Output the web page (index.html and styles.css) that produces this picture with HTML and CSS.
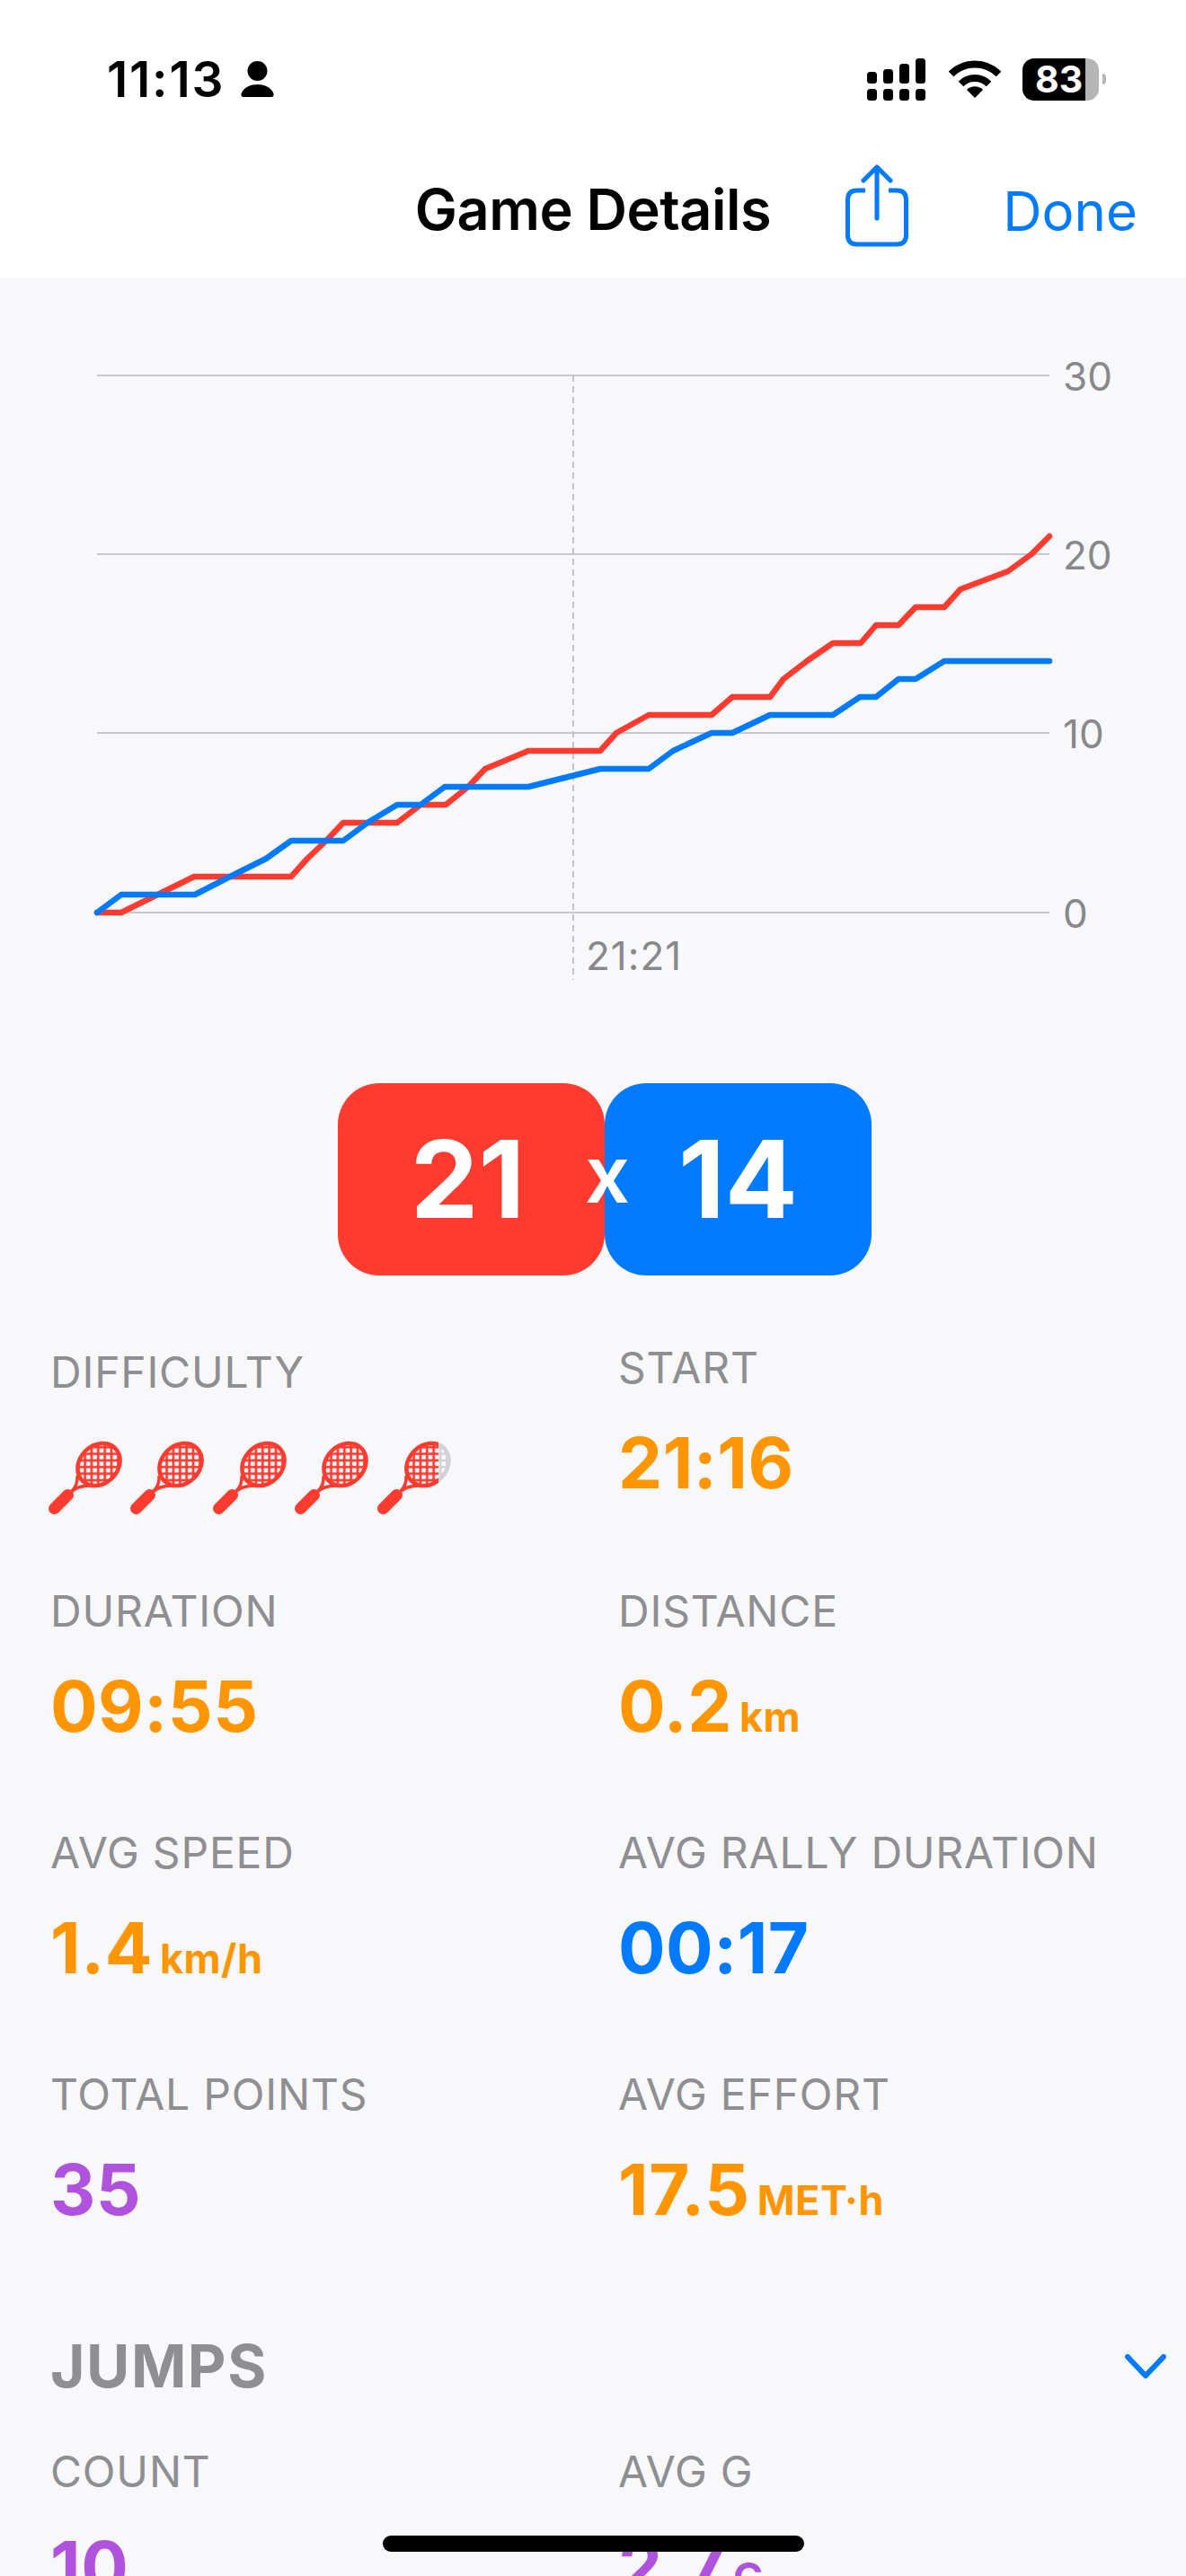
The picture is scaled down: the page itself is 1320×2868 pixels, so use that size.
FILE: index.html
```html
<!DOCTYPE html>
<html lang="en">
<head>
    <meta charset="UTF-8">
    <meta name="viewport" content="width=device-width, initial-scale=1.0">
    <title>Game Details</title>
    <link rel="stylesheet" href="styles.css">
</head>
<body>
    <svg class="defs" width="0" height="0">
        <defs>
            <pattern id="mesh" patternUnits="userSpaceOnUse" width="10.4" height="10.4" patternTransform="translate(1.5 2)">
                <path d="M5.2 1.9 8.5 5.2 5.2 8.5 1.9 5.2Z" fill="#fcfcfd"/>
                <path d="M0 -3.3 3.3 0 0 3.3 -3.3 0Z" fill="#fcfcfd"/>
                <path d="M10.4 -3.3 13.7 0 10.4 3.3 7.1 0Z" fill="#fcfcfd"/>
                <path d="M0 7.1 3.3 10.4 0 13.7 -3.3 10.4Z" fill="#fcfcfd"/>
                <path d="M10.4 7.1 13.7 10.4 10.4 13.7 7.1 10.4Z" fill="#fcfcfd"/>
            </pattern>
            <symbol id="racket" viewBox="0 0 82 82">
                <ellipse cx="56" cy="26.5" rx="28" ry="23.5" transform="rotate(-45 56 26.5)" fill="currentColor"/>
                <ellipse cx="56" cy="26.5" rx="23.5" ry="19" transform="rotate(-45 56 26.5)" fill="url(#mesh)"/>
                <path d="M25 57Q33 50 32 39M25 57Q33 50 46 50" fill="none" stroke="currentColor" stroke-width="3.5"/>
                <path d="M6.5 75.500 21.500 60.500" stroke="currentColor" stroke-width="13" stroke-linecap="round"/>
            </symbol>
            <clipPath id="racketCut">
                <rect x="0" y="0" width="68" height="82"/>
            </clipPath>
        </defs>
    </svg>

    <header class="header">
        <div class="status-bar">
            <div class="status-left">
                <span class="time">11:13</span>
                <svg class="person" width="37" height="40" viewBox="0 0 37 40">
                    <circle cx="18.500" cy="11" r="11"/>
                    <path d="M3 40C0 40 0 37 1 35 4 29 11 26 18.500 26 26 26 33 29 36 35 37 37 37 40 34 40Z"/>
                </svg>
            </div>
            <div class="status-right">
                <svg width="65" height="47" viewBox="0 0 65 47">
                    <rect x="0" y="15" width="11" height="13" rx="3.500"/>
                    <rect x="18" y="12" width="11" height="16" rx="3.500"/>
                    <rect x="36" y="6" width="11" height="22" rx="3.500"/>
                    <rect x="54" y="0" width="11" height="28" rx="3.500"/>
                    <rect x="0" y="34" width="11" height="13" rx="3.500"/>
                    <rect x="18" y="34" width="11" height="13" rx="3.500"/>
                    <rect x="36" y="34" width="11" height="13" rx="3.500"/>
                    <rect x="54" y="34" width="11" height="13" rx="3.500"/>
                </svg>
                <svg width="58" height="42" viewBox="0 0 58 42">
                    <path d="M2.500 15.500A37.500 37.500 0 0 1 55.500 15.500" fill="none" stroke="#000" stroke-width="8"/>
                    <path d="M13.500 26.500A22 22 0 0 1 44.500 26.500" fill="none" stroke="#000" stroke-width="8"/>
                    <path d="M29 42 20 33A12.700 12.700 0 0 1 38 33Z"/>
                </svg>
                <div class="battery">83</div>
            </div>
        </div>
        <nav class="nav">
            <div></div>
            <div class="nav-title">Game Details</div>
            <div class="nav-actions">
                <svg class="share" width="74" height="93" viewBox="0 0 74 93">
                    <path d="M24 29H15Q4.500 29 4.500 39.500V78.500Q4.500 89 15 89H59Q69.500 89 69.500 78.500V39.500Q69.500 29 59 29H50" fill="none" stroke="#007aff" stroke-width="5"/>
                    <path d="M37 60V3M22 18 37 3 52 18" fill="none" stroke="#007aff" stroke-width="5" stroke-linecap="round" stroke-linejoin="round"/>
                </svg>
                <span class="done">Done</span>
            </div>
        </nav>
    </header>

    <!-- viewBox uses page coordinates, so points can be read straight off the chart -->
    <svg class="chart" width="1320" height="897" viewBox="0 309 1320 897">
        <g class="grid-lines">
            <line x1="108" y1="418" x2="1168" y2="418"/>
            <line x1="108" y1="617" x2="1168" y2="617"/>
            <line x1="108" y1="816" x2="1168" y2="816"/>
            <line x1="108" y1="1016" x2="1168" y2="1016"/>
        </g>
        <line class="cursor" x1="638" y1="418" x2="638" y2="1091"/>
        <text class="axis" x="1183" y="435">30</text>
        <text class="axis" x="1183" y="634">20</text>
        <text class="axis" x="1183" y="833">10</text>
        <text class="axis" x="1183" y="1033">0</text>
        <text class="axis axis-time" x="652" y="1080">21:21</text>
        <polyline class="series red" points="108,1016 135,1016 216,976 324,976 342,956 363,936 382,916 442,916 468,896 496,896 521,876 540,856 588,836 668,836 686,816 722,796 792,796 815,776 857,776 872,756 898,736 927,716 958,716 975,696 1000,696 1019,676 1051,676 1069,656 1122,636 1148,617 1168,597"/>
        <polyline class="series blue" points="108,1016 135,996 217,996 256,976 296,956 324,936 382,936 409,916 442,896 468,896 495,876 588,876 668,856 722,856 749,836 792,816 815,816 857,796 927,796 957,776 975,776 1000,756 1019,756 1051,736 1168,736"/>
    </svg>

    <section class="score">
        <div class="score-box score-red">21</div>
        <div class="score-box score-blue">14</div>
        <span class="score-x">x</span>
    </section>

    <section class="stats">
        <div class="stat stat-difficulty">
            <div class="stat-label">DIFFICULTY</div>
            <div class="rackets">
                <svg class="racket" width="82" height="82"><use href="#racket"/></svg>
                <svg class="racket" width="82" height="82"><use href="#racket"/></svg>
                <svg class="racket" width="82" height="82"><use href="#racket"/></svg>
                <svg class="racket" width="82" height="82"><use href="#racket"/></svg>
                <svg class="racket" width="82" height="82">
                    <use class="racket-empty" href="#racket"/>
                    <g clip-path="url(#racketCut)"><use href="#racket"/></g>
                </svg>
            </div>
        </div>
        <div class="stat">
            <div class="stat-label">START</div>
            <div class="stat-value orange">21:16</div>
        </div>
        <div class="stat">
            <div class="stat-label">DURATION</div>
            <div class="stat-value orange">09:55</div>
        </div>
        <div class="stat">
            <div class="stat-label">DISTANCE</div>
            <div class="stat-value orange">0.2<span class="unit">km</span></div>
        </div>
        <div class="stat">
            <div class="stat-label">AVG SPEED</div>
            <div class="stat-value orange">1.4<span class="unit">km/h</span></div>
        </div>
        <div class="stat">
            <div class="stat-label">AVG RALLY DURATION</div>
            <div class="stat-value blue-text">00:17</div>
        </div>
        <div class="stat">
            <div class="stat-label">TOTAL POINTS</div>
            <div class="stat-value purple">35</div>
        </div>
        <div class="stat">
            <div class="stat-label">AVG EFFORT</div>
            <div class="stat-value orange">17.5<span class="unit">MET·h</span></div>
        </div>
    </section>

    <section class="jumps">
        <div class="jumps-head">
            <h2>JUMPS</h2>
            <svg width="46" height="27" viewBox="0 0 46 27">
                <path d="M3 3 23 24 43 3" fill="none" stroke="#007aff" stroke-width="6" stroke-linecap="round" stroke-linejoin="round"/>
            </svg>
        </div>
        <div class="jumps-grid">
            <div class="stat">
                <div class="stat-label">COUNT</div>
                <div class="stat-value purple">10</div>
            </div>
            <div class="stat">
                <div class="stat-label">AVG G</div>
                <div class="stat-value purple">2.7<span class="unit">G</span></div>
            </div>
        </div>
    </section>

    <div class="home-indicator"></div>
</body>
</html>
```

FILE: styles.css
```css
html, body {
    height: 2868px;
    overflow: hidden;
}

body {
    margin: 0;
    position: relative;
    background-color: #f8f8fb;
    font-family: Inter, "Liberation Sans", sans-serif;
    color: #000;
}

.defs {
    position: absolute;
}

/* header */
.header {
    height: 309px;
    background-color: #fff;
}

.status-bar {
    height: 176px;
    display: flex;
    justify-content: space-between;
    align-items: center;
    padding: 0 97px 0 119px;
}

.status-left {
    display: flex;
    align-items: center;
    gap: 18px;
}

.time {
    font-size: 55px;
    font-weight: 600;
    letter-spacing: 1.8px;
}

.status-right {
    display: flex;
    align-items: center;
}

.status-right svg:first-child {
    margin-right: 26px;
}

.battery {
    position: relative;
    width: 85px;
    height: 47px;
    margin-left: 24px;
    border-radius: 13px;
    background: linear-gradient(90deg, #000 70px, #b5b5b5 70px);
    color: #fff;
    font-size: 41px;
    font-weight: 700;
    line-height: 47px;
    padding-left: 14px;
    box-sizing: border-box;
}

.battery::after {
    content: "";
    position: absolute;
    right: -8px;
    top: 17px;
    width: 4px;
    height: 12px;
    border-radius: 0 6px 6px 0;
    background-color: #b5b5b5;
}

.nav {
    height: 133px;
    padding: 0 54px 20px;
    box-sizing: border-box;
    display: grid;
    grid-template-columns: 1fr auto 1fr;
    align-items: center;
}

.nav-title {
    font-size: 63px;
    font-weight: 600;
    letter-spacing: -0.5px;
}

.nav-actions {
    display: flex;
    justify-content: flex-end;
    align-items: center;
    gap: 103px;
}

.share {
    margin-top: -6px;
}

.done {
    font-size: 60px;
    color: #007aff;
    padding-top: 5px;
}

/* chart */
.chart {
    display: block;
}

.grid-lines line {
    stroke: #c8c8cc;
    stroke-width: 2;
}

.cursor {
    stroke: #c4c4c8;
    stroke-width: 2;
    stroke-dasharray: 7 5;
}

.axis {
    font-size: 44px;
    fill: #88888c;
}

.axis-time {
    letter-spacing: 1px;
}

.series {
    fill: none;
    stroke-width: 6.5;
    stroke-linecap: round;
    stroke-linejoin: round;
}

.series.red {
    stroke: #ff3b30;
}

.series.blue {
    stroke: #007aff;
}

/* score */
.score {
    position: relative;
    display: flex;
    justify-content: center;
    padding-left: 26px;
}

.score-box {
    width: 297px;
    height: 214px;
    box-sizing: border-box;
    border-radius: 46px;
    color: #fff;
    font-size: 120px;
    font-weight: 700;
    line-height: 214px;
    text-align: center;
}

.score-red {
    padding-right: 8px;
    background-color: #ff3b30;
}

.score-blue {
    background-color: #007aff;
}

.score-x {
    position: absolute;
    left: 651px;
    top: 46px;
    color: #fff;
    font-size: 88px;
    font-weight: 600;
    line-height: 110px;
}

/* stats */
.stats {
    margin-top: 75px;
    padding-left: 56px;
    display: grid;
    grid-template-columns: 632px 1fr;
    grid-template-rows: 271px repeat(3, 269px);
}

.stat-difficulty {
    padding-top: 5px;
    margin-left: -2px;
}

.stat-label {
    font-size: 48px;
    line-height: 56px;
    letter-spacing: 0.8px;
    color: #8e8e93;
}

.stat-difficulty .stat-label {
    margin-left: 2px;
}

.stat-value {
    margin-top: 33px;
    font-size: 78px;
    font-weight: 700;
    line-height: 90px;
    letter-spacing: 0.5px;
}

.unit {
    margin-left: 8px;
    font-size: 45px;
}

.orange {
    color: #ff9500;
}

.purple {
    color: #af52de;
}

.blue-text {
    color: #007aff;
}

.rackets {
    display: flex;
    gap: 9.4px;
    margin-top: 48px;
    color: #ff3b30;
}

.racket-empty {
    color: #d1d1d6;
}

/* jumps */
.jumps {
    padding: 24px 22px 0 56px;
}

.jumps-head {
    display: flex;
    justify-content: space-between;
    align-items: center;
}

.jumps-head h2 {
    margin: 0;
    font-size: 66px;
    font-weight: 700;
    line-height: 74px;
    letter-spacing: 1.5px;
    color: #8e8e93;
}

.jumps-grid {
    margin-top: 53px;
    display: grid;
    grid-template-columns: 632px 1fr;
}

.home-indicator {
    position: absolute;
    left: 426px;
    top: 2823px;
    width: 469px;
    height: 18px;
    border-radius: 9px;
    background-color: #000;
}
```
